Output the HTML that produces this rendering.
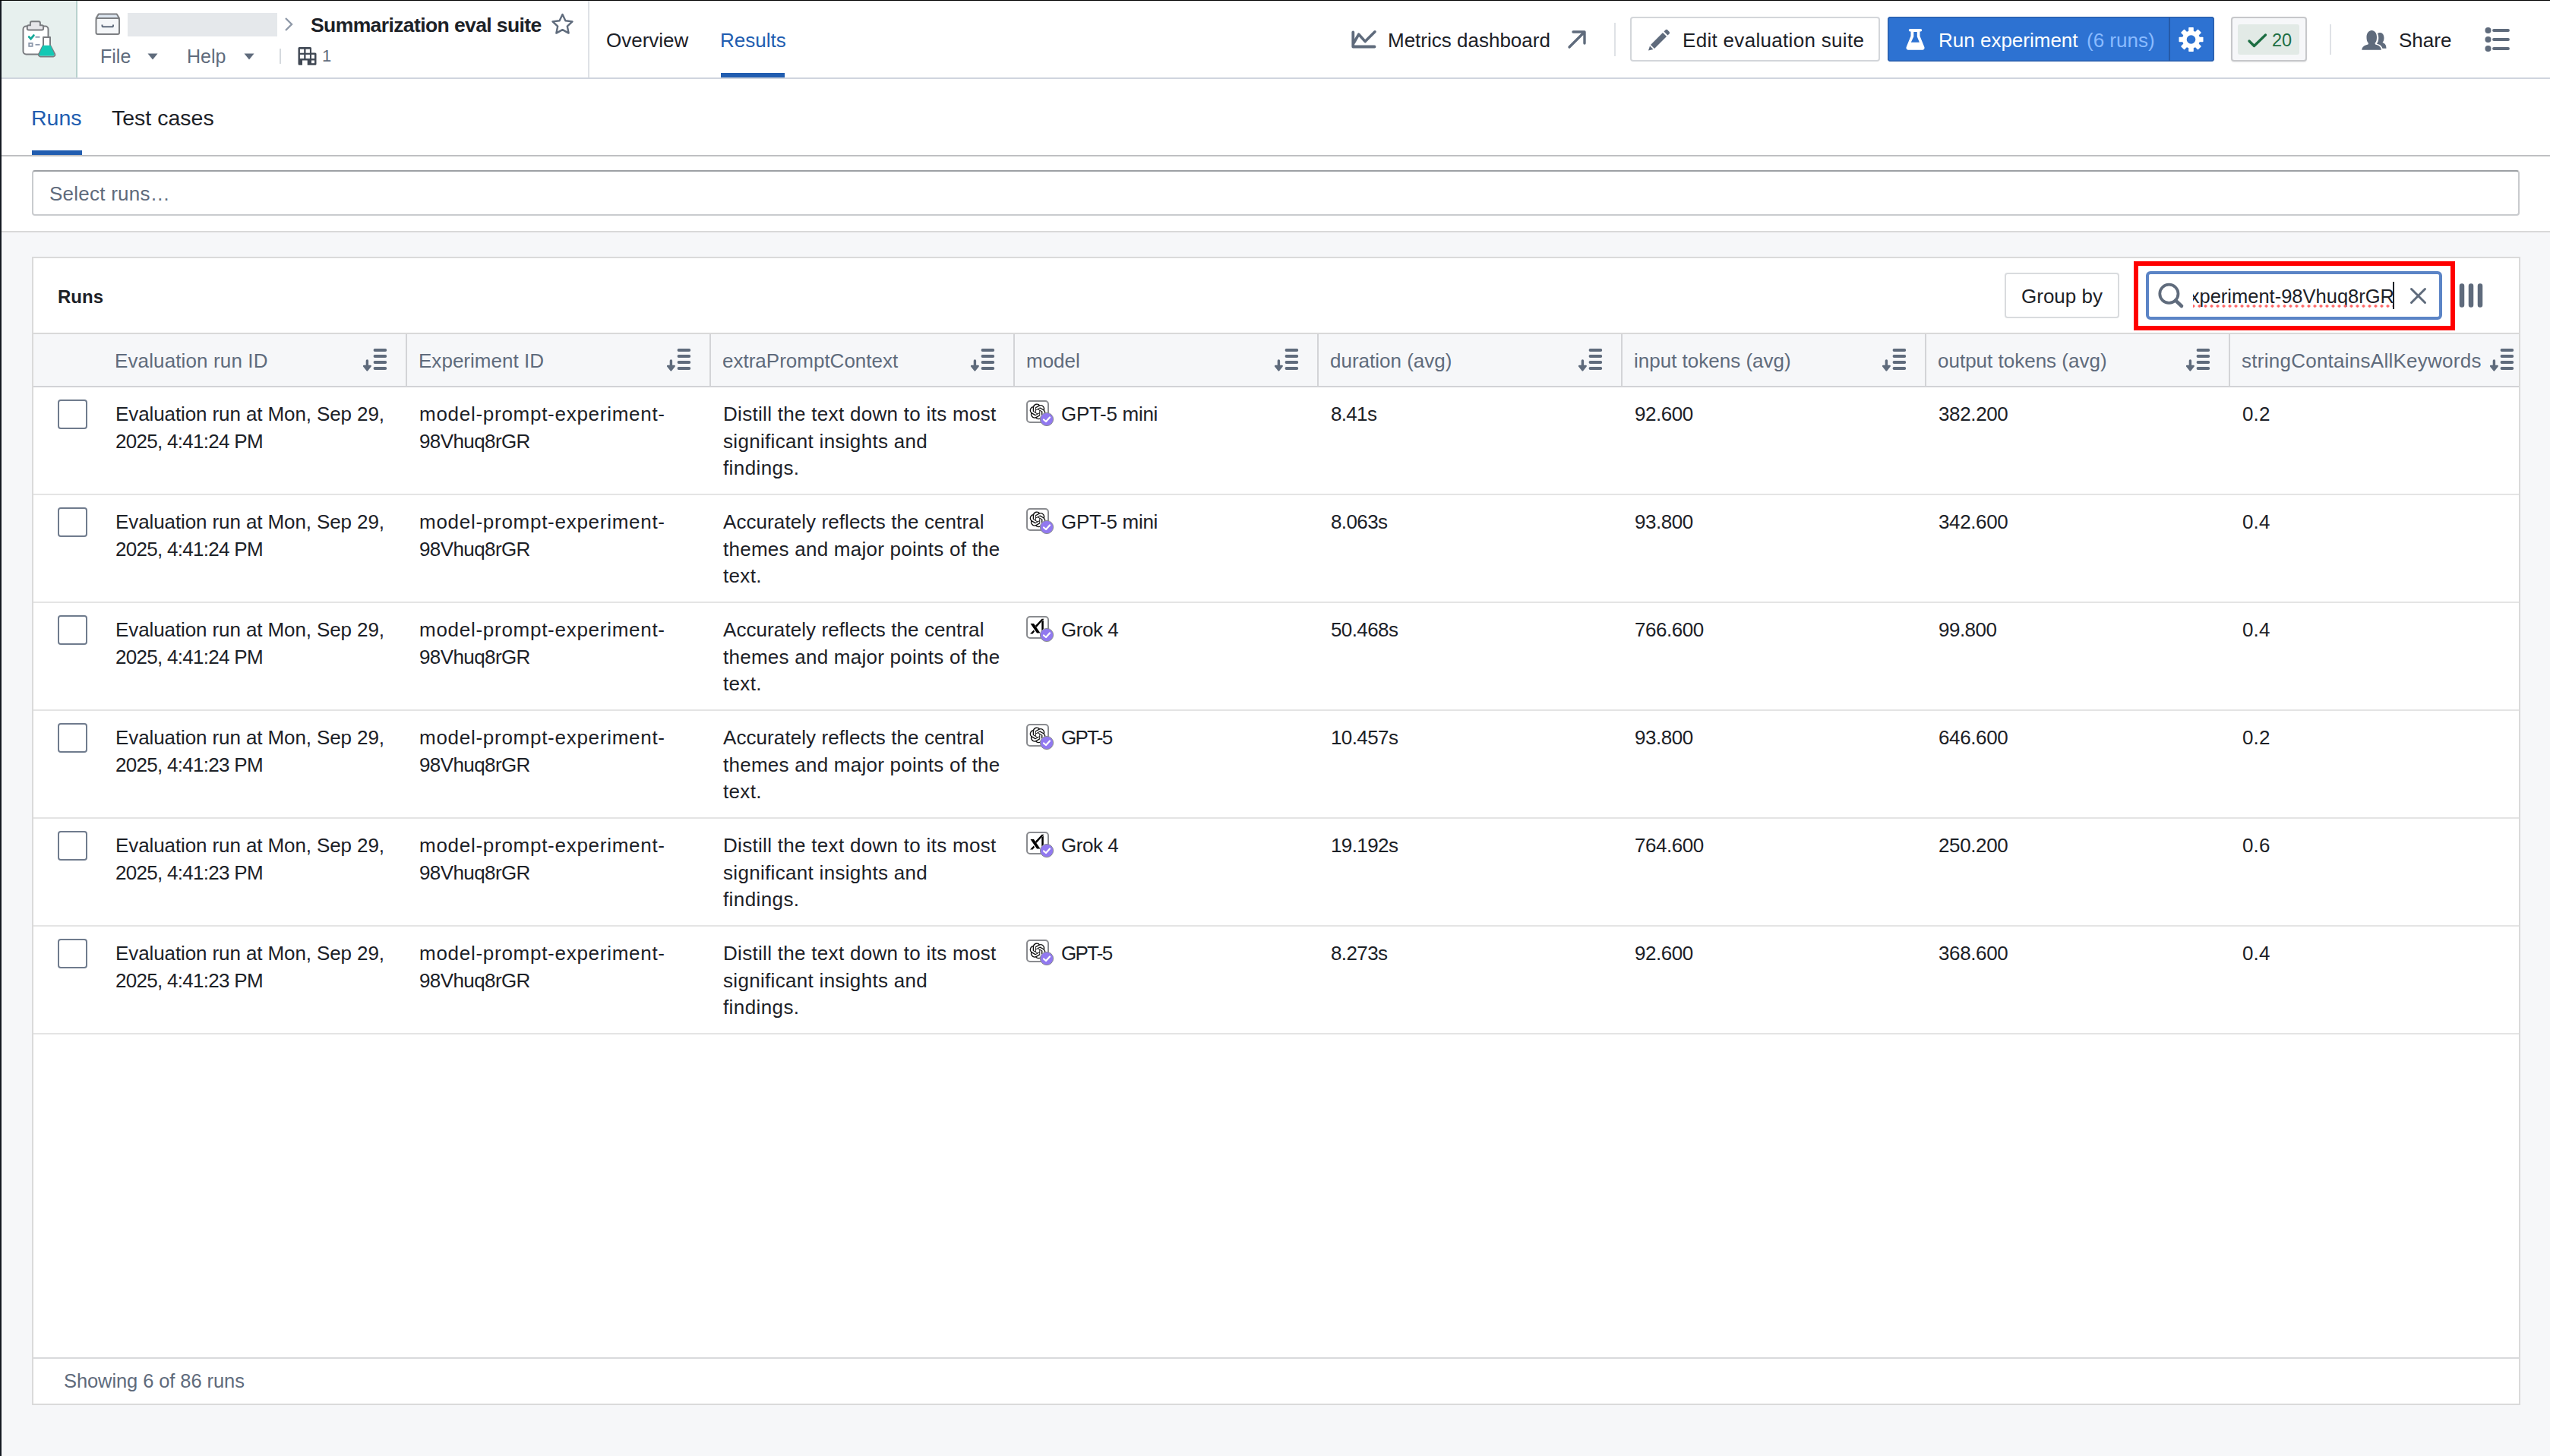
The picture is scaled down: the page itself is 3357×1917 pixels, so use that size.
<!DOCTYPE html>
<html><head><meta charset="utf-8"><title>Summarization eval suite</title>
<style>
html,body{margin:0;padding:0;}
body{width:3357px;height:1917px;position:relative;overflow:hidden;background:#f6f7f9;font-family:"Liberation Sans", sans-serif;}
svg{overflow:visible}
</style></head><body>
<div style="position:absolute;left:0px;top:0px;width:3357px;height:305px;background:#fff"></div>
<div style="position:absolute;left:2px;top:1px;width:98px;height:101px;background:#e7f0ee"></div>
<div style="position:absolute;left:100px;top:1px;width:2px;height:101px;background:#b8d2ce"></div>
<div style="position:absolute;left:0px;top:102px;width:3357px;height:2px;background:#d0d5de"></div>
<svg style="position:absolute;left:26px;top:24px" width="52" height="56" viewBox="0 0 52 56">
<rect x="4.5" y="10.5" width="33" height="37" rx="4" fill="#fff" stroke="#7a7c80" stroke-width="2"/>
<path d="M9.8 13.5 V11.2 a2 2 0 0 1 2 -2 H13.9 V6.2 a2 2 0 0 1 2 -2 H24.9 a2 2 0 0 1 2 2 V9.2 H29.1 a2 2 0 0 1 2 2 V13.5 a2 2 0 0 1 -2 2 H11.8 a2 2 0 0 1 -2 -2 Z" fill="#e6e6ea" stroke="#7a7c80" stroke-width="2"/>
<path d="M12.2 24.6 l2.4 2.6 l3.8 -4.6" fill="none" stroke="#16a99a" stroke-width="2.8" stroke-linecap="round"/>
<rect x="12.2" y="32.9" width="4.4" height="4.0" fill="none" stroke="#8d99ac" stroke-width="1.8"/>
<line x1="20.5" y1="24.8" x2="26.5" y2="24.8" stroke="#8d99ac" stroke-width="1.8"/>
<line x1="20.5" y1="34.8" x2="26.5" y2="34.8" stroke="#8d99ac" stroke-width="1.8"/>
<path d="M31 25.1 H40 V35.5 L46.2 47.3 a2.2 2.2 0 0 1 -1.9 3.1 H27 a2.2 2.2 0 0 1 -1.9 -3.1 L31 35.5 Z" fill="#fff" stroke="#7a7c80" stroke-width="2" stroke-linejoin="round"/>
<path d="M30.4 35.8 H40.6 L45.4 47.2 a1.6 1.6 0 0 1 -1.5 2.2 H27.1 a1.6 1.6 0 0 1 -1.5 -2.2 Z" fill="#14c8b4"/>
</svg>
<svg style="position:absolute;left:124px;top:16px" width="36" height="32" viewBox="0 0 36 32">
<path d="M2.5 8 L5.8 2.5 H29.7 L33 8 z" fill="#dde6f0" stroke="#7d7f82" stroke-width="2" stroke-linejoin="round"/>
<rect x="2.5" y="8" width="30.5" height="21" rx="2" fill="#f5f7f9" stroke="#7d7f82" stroke-width="2"/>
<path d="M10.5 16.5 v1.2 a1.6 1.6 0 0 0 1.6 1.6 h11.3 a1.6 1.6 0 0 0 1.6 -1.6 v-1.2" fill="none" stroke="#5f6b7c" stroke-width="2"/>
</svg>
<div style="position:absolute;left:168px;top:17px;width:197px;height:31px;background:#e5e8eb"></div>
<svg style="position:absolute;left:372px;top:22px" width="16" height="20" viewBox="0 0 16 20"><path d="M4 2 L12 10 L4 18" fill="none" stroke="#8f99a8" stroke-width="2.4"/></svg>
<div style="position:absolute;left:409px;top:19.95px;font-size:26.5px;line-height:26.5px;color:#1c2127;font-weight:700;white-space:nowrap;letter-spacing:-0.6px;">Summarization eval suite</div>
<svg style="position:absolute;left:725px;top:16px" width="32" height="30" viewBox="0 0 32 30"><path d="M15.5 3 L19.4 11.3 L28.5 12.4 L21.8 18.6 L23.6 27.6 L15.5 23.1 L7.4 27.6 L9.2 18.6 L2.5 12.4 L11.6 11.3 Z" fill="none" stroke="#5f6b7c" stroke-width="2.4" stroke-linejoin="round"/></svg>
<div style="position:absolute;left:132px;top:62.10px;font-size:25px;line-height:25px;color:#5f6b7c;font-weight:400;white-space:nowrap;">File</div>
<svg style="position:absolute;left:194px;top:70px" width="14" height="9" viewBox="0 0 14 9"><path d="M0.5 0.5 h13 L7 8.5 z" fill="#5f6b7c"/></svg>
<div style="position:absolute;left:246px;top:62.10px;font-size:25px;line-height:25px;color:#5f6b7c;font-weight:400;white-space:nowrap;">Help</div>
<svg style="position:absolute;left:321px;top:70px" width="14" height="9" viewBox="0 0 14 9"><path d="M0.5 0.5 h13 L7 8.5 z" fill="#5f6b7c"/></svg>
<div style="position:absolute;left:368px;top:64px;width:2px;height:20px;background:#d5d9de"></div>
<svg style="position:absolute;left:392px;top:61px" width="26" height="26" viewBox="0 0 26 26"><path d="M0.5 2.6 a1.5 1.5 0 0 1 1.5 -1.5 H16.5 a1.5 1.5 0 0 1 1.5 1.5 V8.5 H23 a1.5 1.5 0 0 1 1.5 1.5 V23.2 a1.5 1.5 0 0 1 -1.5 1.5 H12.7 V18.5 H6 V24.7 H2 a1.5 1.5 0 0 1 -1.5 -1.5 Z" fill="#404854"/><g fill="#fff"><rect x="2.9" y="3.7" width="5.3" height="5"/><rect x="10.5" y="3.7" width="5.4" height="5"/><rect x="2.9" y="10.9" width="5.3" height="5.2"/><rect x="10.5" y="10.9" width="5.4" height="5.2"/><rect x="18" y="10.9" width="4" height="5.2"/><rect x="18" y="18.5" width="4" height="3.7"/></g></svg>
<div style="position:absolute;left:424px;top:63.20px;font-size:22px;line-height:22px;color:#5f6b7c;font-weight:400;white-space:nowrap;">1</div>
<div style="position:absolute;left:774px;top:1px;width:2px;height:101px;background:#dfe2e6"></div>
<div style="position:absolute;left:798px;top:39.70px;font-size:26px;line-height:26px;color:#1c2127;font-weight:400;white-space:nowrap;">Overview</div>
<div style="position:absolute;left:948px;top:39.70px;font-size:26px;line-height:26px;color:#215db0;font-weight:400;white-space:nowrap;">Results</div>
<div style="position:absolute;left:949px;top:96px;width:84px;height:6px;background:#215db0"></div>
<svg style="position:absolute;left:1777px;top:38px" width="38" height="28" viewBox="0 0 38 28"><path d="M4.3 4.5 V23.5 H32.5" fill="none" stroke="#5f6b7c" stroke-width="3.8" stroke-linejoin="round" stroke-linecap="round"/><path d="M5.5 18 L11.8 7.2 L20.2 16.6 L33 3.8" fill="none" stroke="#5f6b7c" stroke-width="3.6" stroke-linejoin="round" stroke-linecap="round"/></svg>
<div style="position:absolute;left:1827px;top:39.80px;font-size:26px;line-height:26px;color:#1c2127;font-weight:400;white-space:nowrap;">Metrics dashboard</div>
<svg style="position:absolute;left:2062px;top:38px" width="28" height="28" viewBox="0 0 28 28"><path d="M4 24 L23 5 M9 4 H24 V19" fill="none" stroke="#5f6b7c" stroke-width="3.4" stroke-linecap="round" stroke-linejoin="round"/></svg>
<div style="position:absolute;left:2125px;top:30px;width:2px;height:44px;background:#dfe2e6"></div>
<div style="position:absolute;left:2146px;top:22px;width:329px;height:59px;box-sizing:border-box;border:2px solid #d3d6da;border-radius:4px;background:#fff"></div>
<svg style="position:absolute;left:2168px;top:36px" width="32" height="32" viewBox="0 0 32 32"><path d="M5 23 L21 7 L26 12 L10 28 z" fill="#5f6b7c"/><path d="M22.5 5.5 L24.5 3.5 a2 2 0 0 1 2.8 0 l2.2 2.2 a2 2 0 0 1 0 2.8 L27.5 10.5 z" fill="#5f6b7c"/><path d="M4 24.5 L8.5 29 L2 30.5 z" fill="#5f6b7c"/></svg>
<div style="position:absolute;left:2215px;top:39.80px;font-size:26px;line-height:26px;color:#1c2127;font-weight:400;white-space:nowrap;letter-spacing:0.31px;">Edit evaluation suite</div>
<div style="position:absolute;left:2485px;top:22px;width:430px;height:59px;background:#2d72d2;border-radius:4px;box-shadow:inset 0 0 0 1.5px #2a5eab"></div>
<div style="position:absolute;left:2855px;top:23px;width:2px;height:57px;background:#255aa8"></div>
<svg style="position:absolute;left:2506px;top:36px" width="30" height="32" viewBox="0 0 30 32"><path fill-rule="evenodd" d="M8.5 2 H22.5 a1.7 1.7 0 0 1 0 3.4 H21.5 V11.6 L27.4 26 a2.8 2.8 0 0 1 -2.6 3.8 H6.2 a2.8 2.8 0 0 1 -2.6 -3.8 L9.5 11.6 V5.4 H8.5 a1.7 1.7 0 0 1 0 -3.4 Z M13.3 5.9 V12.2 L9.8 19.8 H20.9 L17.8 12.2 V5.9 Z" fill="#fff"/></svg>
<div style="position:absolute;left:2552px;top:39.80px;font-size:26px;line-height:26px;color:#fff;font-weight:400;white-space:nowrap;">Run experiment</div>
<div style="position:absolute;left:2747px;top:39.80px;font-size:26px;line-height:26px;color:#8abbff;font-weight:400;white-space:nowrap;">(6 runs)</div>
<svg style="position:absolute;left:2866px;top:34px" width="36" height="36" viewBox="0 0 36 36"><g transform="translate(18.5,18)"><rect x="-3.3" y="-16" width="6.6" height="8" rx="0.8" transform="rotate(0)" fill="#fff"/><rect x="-3.3" y="-16" width="6.6" height="8" rx="0.8" transform="rotate(45)" fill="#fff"/><rect x="-3.3" y="-16" width="6.6" height="8" rx="0.8" transform="rotate(90)" fill="#fff"/><rect x="-3.3" y="-16" width="6.6" height="8" rx="0.8" transform="rotate(135)" fill="#fff"/><rect x="-3.3" y="-16" width="6.6" height="8" rx="0.8" transform="rotate(180)" fill="#fff"/><rect x="-3.3" y="-16" width="6.6" height="8" rx="0.8" transform="rotate(225)" fill="#fff"/><rect x="-3.3" y="-16" width="6.6" height="8" rx="0.8" transform="rotate(270)" fill="#fff"/><rect x="-3.3" y="-16" width="6.6" height="8" rx="0.8" transform="rotate(315)" fill="#fff"/><circle r="11.6" fill="#fff"/><circle r="5.8" fill="#2d72d2"/></g></svg>
<div style="position:absolute;left:2937px;top:22px;width:100px;height:59px;box-sizing:border-box;border:2px solid #c6c7ca;border-radius:4px;background:#f6f7f9;box-shadow:0 1px 2px rgba(0,0,0,0.08)"></div>
<div style="position:absolute;left:2946px;top:32px;width:81px;height:40px;background:#e2eae6;border-radius:3px"></div>
<svg style="position:absolute;left:2958px;top:43px" width="28" height="22" viewBox="0 0 28 22"><path d="M3 11 L9.5 17.5 L24.5 3" fill="none" stroke="#1c6e42" stroke-width="3.3" stroke-linecap="round" stroke-linejoin="round"/></svg>
<div style="position:absolute;left:2991px;top:42.05px;font-size:23.5px;line-height:23.5px;color:#1c6e42;font-weight:400;white-space:nowrap;">20</div>
<div style="position:absolute;left:3067px;top:32px;width:2px;height:40px;background:#dfe2e6"></div>
<svg style="position:absolute;left:3107px;top:38px" width="38" height="30" viewBox="0 0 38 30"><path d="M23 6 C24 5.3 25.5 5 26.5 5 C29.5 5 31.5 8 31.5 12 C31.5 14.5 30.8 16.5 29.5 18 C32.5 19 34.5 21 34.5 25.8 H29.5 C28.5 22.5 26.5 21 23 20 L22 19.5 C23.5 17.5 24.3 15 24.3 12 C24.3 9.8 23.8 7.8 23 6 Z" fill="#5f6b7c"/><path d="M2.3 27.8 C2.5 23.5 6 21.5 10.5 20.5 L11 19 C9 17 8.5 14 8.5 11 C8.5 5.5 11.5 2 15.3 2 C19.1 2 22 5.5 22 11 C22 14 21.5 17 19.5 19 L20 20.5 C24.5 21.5 27.7 23.5 27.9 27.8 Z" fill="#5f6b7c" stroke="#fff" stroke-width="2.2" paint-order="stroke"/></svg>
<div style="position:absolute;left:3158px;top:39.80px;font-size:26px;line-height:26px;color:#1c2127;font-weight:400;white-space:nowrap;">Share</div>
<svg style="position:absolute;left:3268px;top:33px" width="38" height="38" viewBox="0 0 38 38"><circle cx="7.5" cy="7" r="4" fill="#5f6b7c"/><circle cx="7.5" cy="19" r="4" fill="#5f6b7c"/><circle cx="7.5" cy="31" r="4" fill="#5f6b7c"/>
<path d="M15 7 H34 M15 19 H34 M15 31 H34" stroke="#5f6b7c" stroke-width="3.8" stroke-linecap="round"/></svg>
<div style="position:absolute;left:41px;top:140.75px;font-size:28.5px;line-height:28.5px;color:#215db0;font-weight:400;white-space:nowrap;">Runs</div>
<div style="position:absolute;left:147px;top:140.75px;font-size:28.5px;line-height:28.5px;color:#1c2127;font-weight:400;white-space:nowrap;">Test cases</div>
<div style="position:absolute;left:42px;top:198px;width:65.5px;height:6px;background:#215db0"></div>
<div style="position:absolute;left:2px;top:204px;width:3355px;height:2px;background:#bfc0c2"></div>
<div style="position:absolute;left:42px;top:224px;width:3275px;height:59.5px;box-sizing:border-box;border:2px solid #c9cbce;border-top-color:#9da0a4;border-radius:4px;background:#fff"></div>
<div style="position:absolute;left:65px;top:242.00px;font-size:26px;line-height:26px;color:#5f6b7c;font-weight:400;white-space:nowrap;letter-spacing:0.236px;">Select runs…</div>
<div style="position:absolute;left:2px;top:304px;width:3355px;height:2px;background:#d9d9d9"></div>
<div style="position:absolute;left:2px;top:306px;width:3355px;height:1611px;background:#f6f7f9"></div>
<div style="position:absolute;left:42px;top:338px;width:3276px;height:1512px;box-sizing:border-box;border:2px solid #dadada;background:#fff"></div>
<div style="position:absolute;left:76px;top:379.00px;font-size:24px;line-height:24px;color:#1c2127;font-weight:700;white-space:nowrap;">Runs</div>
<div style="position:absolute;left:2639px;top:359px;width:151px;height:60px;box-sizing:border-box;border:2px solid #d9dbde;border-radius:4px;background:#fff"></div>
<div style="position:absolute;left:2661px;top:377.00px;font-size:26px;line-height:26px;color:#1c2127;font-weight:400;white-space:nowrap;">Group by</div>
<div style="position:absolute;left:2825px;top:357px;width:390px;height:64px;box-sizing:border-box;border:4px solid #5b84c6;border-radius:6px;background:#fff"></div>
<svg style="position:absolute;left:2840px;top:371px" width="36" height="36" viewBox="0 0 36 36"><circle cx="15.4" cy="15.8" r="12.1" fill="none" stroke="#5f6b7c" stroke-width="3.8"/><path d="M24 24.5 L32 32" stroke="#5f6b7c" stroke-width="4.6" stroke-linecap="round"/></svg>
<div style="position:absolute;left:2887px;top:370px;width:265px;height:36px;overflow:hidden">
<div style="position:absolute;right:0;top:7px;font-size:25.5px;line-height:26px;color:#1c2127;white-space:nowrap">experiment-98Vhuq8rGR</div>
</div>
<div style="position:absolute;left:2887px;top:401px;width:264px;height:4px;background:radial-gradient(circle,#ff6363 1.5px,transparent 2.1px) -3.5px 0/8px 4px repeat-x"></div>
<div style="position:absolute;left:3150px;top:371px;width:2px;height:36px;background:#1c2127"></div>
<svg style="position:absolute;left:3172px;top:378px" width="23" height="23" viewBox="0 0 23 23"><path d="M2.5 2.5 L20.5 20.5 M20.5 2.5 L2.5 20.5" stroke="#5f6b7c" stroke-width="3" stroke-linecap="round"/></svg>
<div style="position:absolute;left:2809px;top:344px;width:423px;height:91px;box-sizing:border-box;border:6px solid #ff0000"></div>
<svg style="position:absolute;left:3236px;top:372px" width="36" height="34" viewBox="0 0 36 34"><path d="M5 4.5 V29.5 M17 4.5 V29.5 M29 4.5 V29.5" stroke="#5f6b7c" stroke-width="6.5" stroke-linecap="round"/></svg>
<div style="position:absolute;left:44px;top:438px;width:3272px;height:71px;background:#f6f7f9"></div>
<div style="position:absolute;left:44px;top:438px;width:3272px;height:2px;background:#d9d9d9"></div>
<div style="position:absolute;left:44px;top:508px;width:3272px;height:2px;background:#d2d3d6"></div>
<div style="position:absolute;left:534px;top:440px;width:2px;height:68px;background:#d3d4d7"></div>
<div style="position:absolute;left:934px;top:440px;width:2px;height:68px;background:#d3d4d7"></div>
<div style="position:absolute;left:1334px;top:440px;width:2px;height:68px;background:#d3d4d7"></div>
<div style="position:absolute;left:1734px;top:440px;width:2px;height:68px;background:#d3d4d7"></div>
<div style="position:absolute;left:2134px;top:440px;width:2px;height:68px;background:#d3d4d7"></div>
<div style="position:absolute;left:2534px;top:440px;width:2px;height:68px;background:#d3d4d7"></div>
<div style="position:absolute;left:2934px;top:440px;width:2px;height:68px;background:#d3d4d7"></div>
<div style="position:absolute;left:151px;top:462.20px;font-size:26px;line-height:26px;color:#5f6b7c;font-weight:400;white-space:nowrap;letter-spacing:0.125px;">Evaluation run ID</div>
<svg style="position:absolute;left:477px;top:457px" width="34" height="34" viewBox="0 0 34 34"><path d="M16.5 4 H30.3 M16.5 12 H30.3 M16.5 20 H30.3 M16.5 28 H30.3" stroke="#5f6b7c" stroke-width="3.8" stroke-linecap="round"/><path d="M6.4 18 V26" stroke="#5f6b7c" stroke-width="3.4" stroke-linecap="round"/><path d="M2.2 25 L6.4 30.3 L10.6 25 Z" fill="#5f6b7c" stroke="#5f6b7c" stroke-width="2.6" stroke-linejoin="round"/></svg>
<div style="position:absolute;left:551px;top:462.20px;font-size:26px;line-height:26px;color:#5f6b7c;font-weight:400;white-space:nowrap;letter-spacing:0.025px;">Experiment ID</div>
<svg style="position:absolute;left:877px;top:457px" width="34" height="34" viewBox="0 0 34 34"><path d="M16.5 4 H30.3 M16.5 12 H30.3 M16.5 20 H30.3 M16.5 28 H30.3" stroke="#5f6b7c" stroke-width="3.8" stroke-linecap="round"/><path d="M6.4 18 V26" stroke="#5f6b7c" stroke-width="3.4" stroke-linecap="round"/><path d="M2.2 25 L6.4 30.3 L10.6 25 Z" fill="#5f6b7c" stroke="#5f6b7c" stroke-width="2.6" stroke-linejoin="round"/></svg>
<div style="position:absolute;left:951px;top:462.20px;font-size:26px;line-height:26px;color:#5f6b7c;font-weight:400;white-space:nowrap;">extraPromptContext</div>
<svg style="position:absolute;left:1277px;top:457px" width="34" height="34" viewBox="0 0 34 34"><path d="M16.5 4 H30.3 M16.5 12 H30.3 M16.5 20 H30.3 M16.5 28 H30.3" stroke="#5f6b7c" stroke-width="3.8" stroke-linecap="round"/><path d="M6.4 18 V26" stroke="#5f6b7c" stroke-width="3.4" stroke-linecap="round"/><path d="M2.2 25 L6.4 30.3 L10.6 25 Z" fill="#5f6b7c" stroke="#5f6b7c" stroke-width="2.6" stroke-linejoin="round"/></svg>
<div style="position:absolute;left:1351px;top:462.20px;font-size:26px;line-height:26px;color:#5f6b7c;font-weight:400;white-space:nowrap;">model</div>
<svg style="position:absolute;left:1677px;top:457px" width="34" height="34" viewBox="0 0 34 34"><path d="M16.5 4 H30.3 M16.5 12 H30.3 M16.5 20 H30.3 M16.5 28 H30.3" stroke="#5f6b7c" stroke-width="3.8" stroke-linecap="round"/><path d="M6.4 18 V26" stroke="#5f6b7c" stroke-width="3.4" stroke-linecap="round"/><path d="M2.2 25 L6.4 30.3 L10.6 25 Z" fill="#5f6b7c" stroke="#5f6b7c" stroke-width="2.6" stroke-linejoin="round"/></svg>
<div style="position:absolute;left:1751px;top:462.20px;font-size:26px;line-height:26px;color:#5f6b7c;font-weight:400;white-space:nowrap;">duration (avg)</div>
<svg style="position:absolute;left:2077px;top:457px" width="34" height="34" viewBox="0 0 34 34"><path d="M16.5 4 H30.3 M16.5 12 H30.3 M16.5 20 H30.3 M16.5 28 H30.3" stroke="#5f6b7c" stroke-width="3.8" stroke-linecap="round"/><path d="M6.4 18 V26" stroke="#5f6b7c" stroke-width="3.4" stroke-linecap="round"/><path d="M2.2 25 L6.4 30.3 L10.6 25 Z" fill="#5f6b7c" stroke="#5f6b7c" stroke-width="2.6" stroke-linejoin="round"/></svg>
<div style="position:absolute;left:2151px;top:462.20px;font-size:26px;line-height:26px;color:#5f6b7c;font-weight:400;white-space:nowrap;">input tokens (avg)</div>
<svg style="position:absolute;left:2477px;top:457px" width="34" height="34" viewBox="0 0 34 34"><path d="M16.5 4 H30.3 M16.5 12 H30.3 M16.5 20 H30.3 M16.5 28 H30.3" stroke="#5f6b7c" stroke-width="3.8" stroke-linecap="round"/><path d="M6.4 18 V26" stroke="#5f6b7c" stroke-width="3.4" stroke-linecap="round"/><path d="M2.2 25 L6.4 30.3 L10.6 25 Z" fill="#5f6b7c" stroke="#5f6b7c" stroke-width="2.6" stroke-linejoin="round"/></svg>
<div style="position:absolute;left:2551px;top:462.20px;font-size:26px;line-height:26px;color:#5f6b7c;font-weight:400;white-space:nowrap;">output tokens (avg)</div>
<svg style="position:absolute;left:2877px;top:457px" width="34" height="34" viewBox="0 0 34 34"><path d="M16.5 4 H30.3 M16.5 12 H30.3 M16.5 20 H30.3 M16.5 28 H30.3" stroke="#5f6b7c" stroke-width="3.8" stroke-linecap="round"/><path d="M6.4 18 V26" stroke="#5f6b7c" stroke-width="3.4" stroke-linecap="round"/><path d="M2.2 25 L6.4 30.3 L10.6 25 Z" fill="#5f6b7c" stroke="#5f6b7c" stroke-width="2.6" stroke-linejoin="round"/></svg>
<div style="position:absolute;left:2951px;top:462.20px;font-size:26px;line-height:26px;color:#5f6b7c;font-weight:400;white-space:nowrap;letter-spacing:0.258px;">stringContainsAllKeywords</div>
<svg style="position:absolute;left:3277px;top:457px" width="34" height="34" viewBox="0 0 34 34"><path d="M16.5 4 H30.3 M16.5 12 H30.3 M16.5 20 H30.3 M16.5 28 H30.3" stroke="#5f6b7c" stroke-width="3.8" stroke-linecap="round"/><path d="M6.4 18 V26" stroke="#5f6b7c" stroke-width="3.4" stroke-linecap="round"/><path d="M2.2 25 L6.4 30.3 L10.6 25 Z" fill="#5f6b7c" stroke="#5f6b7c" stroke-width="2.6" stroke-linejoin="round"/></svg>
<div style="position:absolute;left:44px;top:650px;width:3272px;height:2px;background:#e4e4e4"></div>
<div style="position:absolute;left:76px;top:526px;width:39px;height:39px;box-sizing:border-box;border:2px solid #6f7b8d;border-radius:4px;background:#fff"></div>
<div style="position:absolute;left:152px;top:532.00px;font-size:26px;line-height:26px;color:#1c2127;font-weight:400;white-space:nowrap;letter-spacing:-0.103px;">Evaluation run at Mon, Sep 29,</div>
<div style="position:absolute;left:152px;top:567.60px;font-size:26px;line-height:26px;color:#1c2127;font-weight:400;white-space:nowrap;letter-spacing:-0.713px;">2025, 4:41:24 PM</div>
<div style="position:absolute;left:552px;top:532.00px;font-size:26px;line-height:26px;color:#1c2127;font-weight:400;white-space:nowrap;letter-spacing:0.726px;">model-prompt-experiment-</div>
<div style="position:absolute;left:552px;top:567.60px;font-size:26px;line-height:26px;color:#1c2127;font-weight:400;white-space:nowrap;letter-spacing:-0.6px;">98Vhuq8rGR</div>
<div style="position:absolute;left:952px;top:532.00px;font-size:26px;line-height:26px;color:#1c2127;font-weight:400;white-space:nowrap;letter-spacing:0.3px;">Distill the text down to its most</div>
<div style="position:absolute;left:952px;top:567.60px;font-size:26px;line-height:26px;color:#1c2127;font-weight:400;white-space:nowrap;letter-spacing:0.313px;">significant insights and</div>
<div style="position:absolute;left:952px;top:603.20px;font-size:26px;line-height:26px;color:#1c2127;font-weight:400;white-space:nowrap;letter-spacing:0.4px;">findings.</div>
<svg style="position:absolute;left:1351px;top:527px" width="40" height="40" viewBox="0 0 40 40"><rect x="1" y="1" width="28" height="28" rx="4" fill="#fff" stroke="#8a8c90" stroke-width="2"/><g transform="translate(4.6,4.4) scale(0.87)"><path d="M22.2819 9.8211a5.9847 5.9847 0 0 0-.5157-4.9108 6.0462 6.0462 0 0 0-6.5098-2.9A6.0651 6.0651 0 0 0 4.9807 4.1818a5.9847 5.9847 0 0 0-3.9977 2.9 6.0462 6.0462 0 0 0 .7427 7.0966 5.98 5.98 0 0 0 .511 4.9107 6.051 6.051 0 0 0 6.5146 2.9001A5.9847 5.9847 0 0 0 13.2599 24a6.0557 6.0557 0 0 0 5.7718-4.2058 5.9894 5.9894 0 0 0 3.9977-2.9001 6.0557 6.0557 0 0 0-.7475-7.0729zm-9.022 12.6081a4.4755 4.4755 0 0 1-2.8764-1.0408l.1419-.0804 4.7783-2.7582a.7948.7948 0 0 0 .3927-.6813v-6.7369l2.02 1.1686a.071.071 0 0 1 .038.052v5.5826a4.504 4.504 0 0 1-4.4945 4.4944zm-9.6607-4.1254a4.4708 4.4708 0 0 1-.5346-3.0137l.142.0852 4.783 2.7582a.7712.7712 0 0 0 .7806 0l5.8428-3.3685v2.3324a.0804.0804 0 0 1-.0332.0615L9.74 19.9502a4.4992 4.4992 0 0 1-6.1408-1.6464zM2.3408 7.8956a4.485 4.485 0 0 1 2.3655-1.9728V11.6a.7664.7664 0 0 0 .3879.6765l5.8144 3.3543-2.0201 1.1685a.0757.0757 0 0 1-.071 0l-4.8303-2.7865A4.504 4.504 0 0 1 2.3408 7.872zm16.5963 3.8558L13.1038 8.364 15.1192 7.2a.0757.0757 0 0 1 .071 0l4.8303 2.7913a4.4944 4.4944 0 0 1-.6765 8.1042v-5.6772a.79.79 0 0 0-.407-.667zm2.0107-3.0231l-.142-.0852-4.7735-2.7818a.7759.7759 0 0 0-.7854 0L9.409 9.2297V6.8974a.0662.0662 0 0 1 .0284-.0615l4.8303-2.7866a4.4992 4.4992 0 0 1 6.6802 4.66zM8.3065 12.863l-2.02-1.1638a.0804.0804 0 0 1-.038-.0567V6.0742a4.4992 4.4992 0 0 1 7.3757-3.4537l-.142.0805L8.704 5.459a.7948.7948 0 0 0-.3927.6813zm1.0976-2.3654l2.602-1.4998 2.6069 1.4998v2.9994l-2.5974 1.4997-2.6067-1.4997Z" fill="#111"/></g><circle cx="27" cy="25" r="8.6" fill="#9179f0" stroke="#8a8c90" stroke-width="1"/><path d="M23 25.5 L26 28 L31 22.5" fill="none" stroke="#fff" stroke-width="2.2" stroke-linecap="round" stroke-linejoin="round"/></svg>
<div style="position:absolute;left:1397px;top:532.00px;font-size:26px;line-height:26px;color:#1c2127;font-weight:400;white-space:nowrap;letter-spacing:-0.3px;">GPT-5 mini</div>
<div style="position:absolute;left:1752px;top:532.00px;font-size:26px;line-height:26px;color:#1c2127;font-weight:400;white-space:nowrap;letter-spacing:-0.675px;">8.41s</div>
<div style="position:absolute;left:2152px;top:532.00px;font-size:26px;line-height:26px;color:#1c2127;font-weight:400;white-space:nowrap;letter-spacing:-0.45px;">92.600</div>
<div style="position:absolute;left:2552px;top:532.00px;font-size:26px;line-height:26px;color:#1c2127;font-weight:400;white-space:nowrap;letter-spacing:-0.367px;">382.200</div>
<div style="position:absolute;left:2952px;top:532.00px;font-size:26px;line-height:26px;color:#1c2127;font-weight:400;white-space:nowrap;letter-spacing:0.1px;">0.2</div>
<div style="position:absolute;left:44px;top:792px;width:3272px;height:2px;background:#e4e4e4"></div>
<div style="position:absolute;left:76px;top:668px;width:39px;height:39px;box-sizing:border-box;border:2px solid #6f7b8d;border-radius:4px;background:#fff"></div>
<div style="position:absolute;left:152px;top:674.00px;font-size:26px;line-height:26px;color:#1c2127;font-weight:400;white-space:nowrap;letter-spacing:-0.103px;">Evaluation run at Mon, Sep 29,</div>
<div style="position:absolute;left:152px;top:709.60px;font-size:26px;line-height:26px;color:#1c2127;font-weight:400;white-space:nowrap;letter-spacing:-0.713px;">2025, 4:41:24 PM</div>
<div style="position:absolute;left:552px;top:674.00px;font-size:26px;line-height:26px;color:#1c2127;font-weight:400;white-space:nowrap;letter-spacing:0.726px;">model-prompt-experiment-</div>
<div style="position:absolute;left:552px;top:709.60px;font-size:26px;line-height:26px;color:#1c2127;font-weight:400;white-space:nowrap;letter-spacing:-0.6px;">98Vhuq8rGR</div>
<div style="position:absolute;left:952px;top:674.00px;font-size:26px;line-height:26px;color:#1c2127;font-weight:400;white-space:nowrap;letter-spacing:0.08px;">Accurately reflects the central</div>
<div style="position:absolute;left:952px;top:709.60px;font-size:26px;line-height:26px;color:#1c2127;font-weight:400;white-space:nowrap;letter-spacing:0.252px;">themes and major points of the</div>
<div style="position:absolute;left:952px;top:745.20px;font-size:26px;line-height:26px;color:#1c2127;font-weight:400;white-space:nowrap;letter-spacing:0.325px;">text.</div>
<svg style="position:absolute;left:1351px;top:669px" width="40" height="40" viewBox="0 0 40 40"><rect x="1" y="1" width="28" height="28" rx="4" fill="#fff" stroke="#8a8c90" stroke-width="2"/><g transform="translate(4.6,4.4) scale(0.87)"><path d="M22.2819 9.8211a5.9847 5.9847 0 0 0-.5157-4.9108 6.0462 6.0462 0 0 0-6.5098-2.9A6.0651 6.0651 0 0 0 4.9807 4.1818a5.9847 5.9847 0 0 0-3.9977 2.9 6.0462 6.0462 0 0 0 .7427 7.0966 5.98 5.98 0 0 0 .511 4.9107 6.051 6.051 0 0 0 6.5146 2.9001A5.9847 5.9847 0 0 0 13.2599 24a6.0557 6.0557 0 0 0 5.7718-4.2058 5.9894 5.9894 0 0 0 3.9977-2.9001 6.0557 6.0557 0 0 0-.7475-7.0729zm-9.022 12.6081a4.4755 4.4755 0 0 1-2.8764-1.0408l.1419-.0804 4.7783-2.7582a.7948.7948 0 0 0 .3927-.6813v-6.7369l2.02 1.1686a.071.071 0 0 1 .038.052v5.5826a4.504 4.504 0 0 1-4.4945 4.4944zm-9.6607-4.1254a4.4708 4.4708 0 0 1-.5346-3.0137l.142.0852 4.783 2.7582a.7712.7712 0 0 0 .7806 0l5.8428-3.3685v2.3324a.0804.0804 0 0 1-.0332.0615L9.74 19.9502a4.4992 4.4992 0 0 1-6.1408-1.6464zM2.3408 7.8956a4.485 4.485 0 0 1 2.3655-1.9728V11.6a.7664.7664 0 0 0 .3879.6765l5.8144 3.3543-2.0201 1.1685a.0757.0757 0 0 1-.071 0l-4.8303-2.7865A4.504 4.504 0 0 1 2.3408 7.872zm16.5963 3.8558L13.1038 8.364 15.1192 7.2a.0757.0757 0 0 1 .071 0l4.8303 2.7913a4.4944 4.4944 0 0 1-.6765 8.1042v-5.6772a.79.79 0 0 0-.407-.667zm2.0107-3.0231l-.142-.0852-4.7735-2.7818a.7759.7759 0 0 0-.7854 0L9.409 9.2297V6.8974a.0662.0662 0 0 1 .0284-.0615l4.8303-2.7866a4.4992 4.4992 0 0 1 6.6802 4.66zM8.3065 12.863l-2.02-1.1638a.0804.0804 0 0 1-.038-.0567V6.0742a4.4992 4.4992 0 0 1 7.3757-3.4537l-.142.0805L8.704 5.459a.7948.7948 0 0 0-.3927.6813zm1.0976-2.3654l2.602-1.4998 2.6069 1.4998v2.9994l-2.5974 1.4997-2.6067-1.4997Z" fill="#111"/></g><circle cx="27" cy="25" r="8.6" fill="#9179f0" stroke="#8a8c90" stroke-width="1"/><path d="M23 25.5 L26 28 L31 22.5" fill="none" stroke="#fff" stroke-width="2.2" stroke-linecap="round" stroke-linejoin="round"/></svg>
<div style="position:absolute;left:1397px;top:674.00px;font-size:26px;line-height:26px;color:#1c2127;font-weight:400;white-space:nowrap;letter-spacing:-0.3px;">GPT-5 mini</div>
<div style="position:absolute;left:1752px;top:674.00px;font-size:26px;line-height:26px;color:#1c2127;font-weight:400;white-space:nowrap;letter-spacing:-0.6px;">8.063s</div>
<div style="position:absolute;left:2152px;top:674.00px;font-size:26px;line-height:26px;color:#1c2127;font-weight:400;white-space:nowrap;letter-spacing:-0.45px;">93.800</div>
<div style="position:absolute;left:2552px;top:674.00px;font-size:26px;line-height:26px;color:#1c2127;font-weight:400;white-space:nowrap;letter-spacing:-0.37px;">342.600</div>
<div style="position:absolute;left:2952px;top:674.00px;font-size:26px;line-height:26px;color:#1c2127;font-weight:400;white-space:nowrap;letter-spacing:0.1px;">0.4</div>
<div style="position:absolute;left:44px;top:934px;width:3272px;height:2px;background:#e4e4e4"></div>
<div style="position:absolute;left:76px;top:810px;width:39px;height:39px;box-sizing:border-box;border:2px solid #6f7b8d;border-radius:4px;background:#fff"></div>
<div style="position:absolute;left:152px;top:816.00px;font-size:26px;line-height:26px;color:#1c2127;font-weight:400;white-space:nowrap;letter-spacing:-0.103px;">Evaluation run at Mon, Sep 29,</div>
<div style="position:absolute;left:152px;top:851.60px;font-size:26px;line-height:26px;color:#1c2127;font-weight:400;white-space:nowrap;letter-spacing:-0.713px;">2025, 4:41:24 PM</div>
<div style="position:absolute;left:552px;top:816.00px;font-size:26px;line-height:26px;color:#1c2127;font-weight:400;white-space:nowrap;letter-spacing:0.726px;">model-prompt-experiment-</div>
<div style="position:absolute;left:552px;top:851.60px;font-size:26px;line-height:26px;color:#1c2127;font-weight:400;white-space:nowrap;letter-spacing:-0.6px;">98Vhuq8rGR</div>
<div style="position:absolute;left:952px;top:816.00px;font-size:26px;line-height:26px;color:#1c2127;font-weight:400;white-space:nowrap;letter-spacing:0.08px;">Accurately reflects the central</div>
<div style="position:absolute;left:952px;top:851.60px;font-size:26px;line-height:26px;color:#1c2127;font-weight:400;white-space:nowrap;letter-spacing:0.252px;">themes and major points of the</div>
<div style="position:absolute;left:952px;top:887.20px;font-size:26px;line-height:26px;color:#1c2127;font-weight:400;white-space:nowrap;letter-spacing:0.325px;">text.</div>
<svg style="position:absolute;left:1351px;top:811px" width="40" height="40" viewBox="0 0 40 40"><rect x="1" y="1" width="28" height="28" rx="4" fill="#fff" stroke="#8a8c90" stroke-width="2"/><path d="M5.5 10 L10 10 L18.5 22.5 L14 22.5 Z" fill="#000"/><path d="M23.5 3.8 L13.5 15 L12 12.8 L20.5 3.8 Z" fill="#000"/><path d="M5 23.5 L9.8 18.5 L11 20.5 L8.5 23.5 Z" fill="#000"/><path d="M20.3 7.5 L22.8 5.5 V17 L20.3 19.5 Z" fill="#000"/><circle cx="27" cy="25" r="8.6" fill="#9179f0" stroke="#8a8c90" stroke-width="1"/><path d="M23 25.5 L26 28 L31 22.5" fill="none" stroke="#fff" stroke-width="2.2" stroke-linecap="round" stroke-linejoin="round"/></svg>
<div style="position:absolute;left:1397px;top:816.00px;font-size:26px;line-height:26px;color:#1c2127;font-weight:400;white-space:nowrap;letter-spacing:-0.46px;">Grok 4</div>
<div style="position:absolute;left:1752px;top:816.00px;font-size:26px;line-height:26px;color:#1c2127;font-weight:400;white-space:nowrap;letter-spacing:-0.6px;">50.468s</div>
<div style="position:absolute;left:2152px;top:816.00px;font-size:26px;line-height:26px;color:#1c2127;font-weight:400;white-space:nowrap;letter-spacing:-0.45px;">766.600</div>
<div style="position:absolute;left:2552px;top:816.00px;font-size:26px;line-height:26px;color:#1c2127;font-weight:400;white-space:nowrap;letter-spacing:-0.52px;">99.800</div>
<div style="position:absolute;left:2952px;top:816.00px;font-size:26px;line-height:26px;color:#1c2127;font-weight:400;white-space:nowrap;letter-spacing:0.1px;">0.4</div>
<div style="position:absolute;left:44px;top:1076px;width:3272px;height:2px;background:#e4e4e4"></div>
<div style="position:absolute;left:76px;top:952px;width:39px;height:39px;box-sizing:border-box;border:2px solid #6f7b8d;border-radius:4px;background:#fff"></div>
<div style="position:absolute;left:152px;top:958.00px;font-size:26px;line-height:26px;color:#1c2127;font-weight:400;white-space:nowrap;letter-spacing:-0.103px;">Evaluation run at Mon, Sep 29,</div>
<div style="position:absolute;left:152px;top:993.60px;font-size:26px;line-height:26px;color:#1c2127;font-weight:400;white-space:nowrap;letter-spacing:-0.713px;">2025, 4:41:23 PM</div>
<div style="position:absolute;left:552px;top:958.00px;font-size:26px;line-height:26px;color:#1c2127;font-weight:400;white-space:nowrap;letter-spacing:0.726px;">model-prompt-experiment-</div>
<div style="position:absolute;left:552px;top:993.60px;font-size:26px;line-height:26px;color:#1c2127;font-weight:400;white-space:nowrap;letter-spacing:-0.6px;">98Vhuq8rGR</div>
<div style="position:absolute;left:952px;top:958.00px;font-size:26px;line-height:26px;color:#1c2127;font-weight:400;white-space:nowrap;letter-spacing:0.08px;">Accurately reflects the central</div>
<div style="position:absolute;left:952px;top:993.60px;font-size:26px;line-height:26px;color:#1c2127;font-weight:400;white-space:nowrap;letter-spacing:0.252px;">themes and major points of the</div>
<div style="position:absolute;left:952px;top:1029.20px;font-size:26px;line-height:26px;color:#1c2127;font-weight:400;white-space:nowrap;letter-spacing:0.325px;">text.</div>
<svg style="position:absolute;left:1351px;top:953px" width="40" height="40" viewBox="0 0 40 40"><rect x="1" y="1" width="28" height="28" rx="4" fill="#fff" stroke="#8a8c90" stroke-width="2"/><g transform="translate(4.6,4.4) scale(0.87)"><path d="M22.2819 9.8211a5.9847 5.9847 0 0 0-.5157-4.9108 6.0462 6.0462 0 0 0-6.5098-2.9A6.0651 6.0651 0 0 0 4.9807 4.1818a5.9847 5.9847 0 0 0-3.9977 2.9 6.0462 6.0462 0 0 0 .7427 7.0966 5.98 5.98 0 0 0 .511 4.9107 6.051 6.051 0 0 0 6.5146 2.9001A5.9847 5.9847 0 0 0 13.2599 24a6.0557 6.0557 0 0 0 5.7718-4.2058 5.9894 5.9894 0 0 0 3.9977-2.9001 6.0557 6.0557 0 0 0-.7475-7.0729zm-9.022 12.6081a4.4755 4.4755 0 0 1-2.8764-1.0408l.1419-.0804 4.7783-2.7582a.7948.7948 0 0 0 .3927-.6813v-6.7369l2.02 1.1686a.071.071 0 0 1 .038.052v5.5826a4.504 4.504 0 0 1-4.4945 4.4944zm-9.6607-4.1254a4.4708 4.4708 0 0 1-.5346-3.0137l.142.0852 4.783 2.7582a.7712.7712 0 0 0 .7806 0l5.8428-3.3685v2.3324a.0804.0804 0 0 1-.0332.0615L9.74 19.9502a4.4992 4.4992 0 0 1-6.1408-1.6464zM2.3408 7.8956a4.485 4.485 0 0 1 2.3655-1.9728V11.6a.7664.7664 0 0 0 .3879.6765l5.8144 3.3543-2.0201 1.1685a.0757.0757 0 0 1-.071 0l-4.8303-2.7865A4.504 4.504 0 0 1 2.3408 7.872zm16.5963 3.8558L13.1038 8.364 15.1192 7.2a.0757.0757 0 0 1 .071 0l4.8303 2.7913a4.4944 4.4944 0 0 1-.6765 8.1042v-5.6772a.79.79 0 0 0-.407-.667zm2.0107-3.0231l-.142-.0852-4.7735-2.7818a.7759.7759 0 0 0-.7854 0L9.409 9.2297V6.8974a.0662.0662 0 0 1 .0284-.0615l4.8303-2.7866a4.4992 4.4992 0 0 1 6.6802 4.66zM8.3065 12.863l-2.02-1.1638a.0804.0804 0 0 1-.038-.0567V6.0742a4.4992 4.4992 0 0 1 7.3757-3.4537l-.142.0805L8.704 5.459a.7948.7948 0 0 0-.3927.6813zm1.0976-2.3654l2.602-1.4998 2.6069 1.4998v2.9994l-2.5974 1.4997-2.6067-1.4997Z" fill="#111"/></g><circle cx="27" cy="25" r="8.6" fill="#9179f0" stroke="#8a8c90" stroke-width="1"/><path d="M23 25.5 L26 28 L31 22.5" fill="none" stroke="#fff" stroke-width="2.2" stroke-linecap="round" stroke-linejoin="round"/></svg>
<div style="position:absolute;left:1397px;top:958.00px;font-size:26px;line-height:26px;color:#1c2127;font-weight:400;white-space:nowrap;letter-spacing:-1.75px;">GPT-5</div>
<div style="position:absolute;left:1752px;top:958.00px;font-size:26px;line-height:26px;color:#1c2127;font-weight:400;white-space:nowrap;letter-spacing:-0.6px;">10.457s</div>
<div style="position:absolute;left:2152px;top:958.00px;font-size:26px;line-height:26px;color:#1c2127;font-weight:400;white-space:nowrap;letter-spacing:-0.45px;">93.800</div>
<div style="position:absolute;left:2552px;top:958.00px;font-size:26px;line-height:26px;color:#1c2127;font-weight:400;white-space:nowrap;letter-spacing:-0.37px;">646.600</div>
<div style="position:absolute;left:2952px;top:958.00px;font-size:26px;line-height:26px;color:#1c2127;font-weight:400;white-space:nowrap;letter-spacing:0.1px;">0.2</div>
<div style="position:absolute;left:44px;top:1218px;width:3272px;height:2px;background:#e4e4e4"></div>
<div style="position:absolute;left:76px;top:1094px;width:39px;height:39px;box-sizing:border-box;border:2px solid #6f7b8d;border-radius:4px;background:#fff"></div>
<div style="position:absolute;left:152px;top:1100.00px;font-size:26px;line-height:26px;color:#1c2127;font-weight:400;white-space:nowrap;letter-spacing:-0.103px;">Evaluation run at Mon, Sep 29,</div>
<div style="position:absolute;left:152px;top:1135.60px;font-size:26px;line-height:26px;color:#1c2127;font-weight:400;white-space:nowrap;letter-spacing:-0.713px;">2025, 4:41:23 PM</div>
<div style="position:absolute;left:552px;top:1100.00px;font-size:26px;line-height:26px;color:#1c2127;font-weight:400;white-space:nowrap;letter-spacing:0.726px;">model-prompt-experiment-</div>
<div style="position:absolute;left:552px;top:1135.60px;font-size:26px;line-height:26px;color:#1c2127;font-weight:400;white-space:nowrap;letter-spacing:-0.6px;">98Vhuq8rGR</div>
<div style="position:absolute;left:952px;top:1100.00px;font-size:26px;line-height:26px;color:#1c2127;font-weight:400;white-space:nowrap;letter-spacing:0.3px;">Distill the text down to its most</div>
<div style="position:absolute;left:952px;top:1135.60px;font-size:26px;line-height:26px;color:#1c2127;font-weight:400;white-space:nowrap;letter-spacing:0.313px;">significant insights and</div>
<div style="position:absolute;left:952px;top:1171.20px;font-size:26px;line-height:26px;color:#1c2127;font-weight:400;white-space:nowrap;letter-spacing:0.4px;">findings.</div>
<svg style="position:absolute;left:1351px;top:1095px" width="40" height="40" viewBox="0 0 40 40"><rect x="1" y="1" width="28" height="28" rx="4" fill="#fff" stroke="#8a8c90" stroke-width="2"/><path d="M5.5 10 L10 10 L18.5 22.5 L14 22.5 Z" fill="#000"/><path d="M23.5 3.8 L13.5 15 L12 12.8 L20.5 3.8 Z" fill="#000"/><path d="M5 23.5 L9.8 18.5 L11 20.5 L8.5 23.5 Z" fill="#000"/><path d="M20.3 7.5 L22.8 5.5 V17 L20.3 19.5 Z" fill="#000"/><circle cx="27" cy="25" r="8.6" fill="#9179f0" stroke="#8a8c90" stroke-width="1"/><path d="M23 25.5 L26 28 L31 22.5" fill="none" stroke="#fff" stroke-width="2.2" stroke-linecap="round" stroke-linejoin="round"/></svg>
<div style="position:absolute;left:1397px;top:1100.00px;font-size:26px;line-height:26px;color:#1c2127;font-weight:400;white-space:nowrap;letter-spacing:-0.46px;">Grok 4</div>
<div style="position:absolute;left:1752px;top:1100.00px;font-size:26px;line-height:26px;color:#1c2127;font-weight:400;white-space:nowrap;letter-spacing:-0.6px;">19.192s</div>
<div style="position:absolute;left:2152px;top:1100.00px;font-size:26px;line-height:26px;color:#1c2127;font-weight:400;white-space:nowrap;letter-spacing:-0.45px;">764.600</div>
<div style="position:absolute;left:2552px;top:1100.00px;font-size:26px;line-height:26px;color:#1c2127;font-weight:400;white-space:nowrap;letter-spacing:-0.37px;">250.200</div>
<div style="position:absolute;left:2952px;top:1100.00px;font-size:26px;line-height:26px;color:#1c2127;font-weight:400;white-space:nowrap;letter-spacing:0.1px;">0.6</div>
<div style="position:absolute;left:44px;top:1360px;width:3272px;height:2px;background:#e4e4e4"></div>
<div style="position:absolute;left:76px;top:1236px;width:39px;height:39px;box-sizing:border-box;border:2px solid #6f7b8d;border-radius:4px;background:#fff"></div>
<div style="position:absolute;left:152px;top:1242.00px;font-size:26px;line-height:26px;color:#1c2127;font-weight:400;white-space:nowrap;letter-spacing:-0.103px;">Evaluation run at Mon, Sep 29,</div>
<div style="position:absolute;left:152px;top:1277.60px;font-size:26px;line-height:26px;color:#1c2127;font-weight:400;white-space:nowrap;letter-spacing:-0.713px;">2025, 4:41:23 PM</div>
<div style="position:absolute;left:552px;top:1242.00px;font-size:26px;line-height:26px;color:#1c2127;font-weight:400;white-space:nowrap;letter-spacing:0.726px;">model-prompt-experiment-</div>
<div style="position:absolute;left:552px;top:1277.60px;font-size:26px;line-height:26px;color:#1c2127;font-weight:400;white-space:nowrap;letter-spacing:-0.6px;">98Vhuq8rGR</div>
<div style="position:absolute;left:952px;top:1242.00px;font-size:26px;line-height:26px;color:#1c2127;font-weight:400;white-space:nowrap;letter-spacing:0.3px;">Distill the text down to its most</div>
<div style="position:absolute;left:952px;top:1277.60px;font-size:26px;line-height:26px;color:#1c2127;font-weight:400;white-space:nowrap;letter-spacing:0.313px;">significant insights and</div>
<div style="position:absolute;left:952px;top:1313.20px;font-size:26px;line-height:26px;color:#1c2127;font-weight:400;white-space:nowrap;letter-spacing:0.4px;">findings.</div>
<svg style="position:absolute;left:1351px;top:1237px" width="40" height="40" viewBox="0 0 40 40"><rect x="1" y="1" width="28" height="28" rx="4" fill="#fff" stroke="#8a8c90" stroke-width="2"/><g transform="translate(4.6,4.4) scale(0.87)"><path d="M22.2819 9.8211a5.9847 5.9847 0 0 0-.5157-4.9108 6.0462 6.0462 0 0 0-6.5098-2.9A6.0651 6.0651 0 0 0 4.9807 4.1818a5.9847 5.9847 0 0 0-3.9977 2.9 6.0462 6.0462 0 0 0 .7427 7.0966 5.98 5.98 0 0 0 .511 4.9107 6.051 6.051 0 0 0 6.5146 2.9001A5.9847 5.9847 0 0 0 13.2599 24a6.0557 6.0557 0 0 0 5.7718-4.2058 5.9894 5.9894 0 0 0 3.9977-2.9001 6.0557 6.0557 0 0 0-.7475-7.0729zm-9.022 12.6081a4.4755 4.4755 0 0 1-2.8764-1.0408l.1419-.0804 4.7783-2.7582a.7948.7948 0 0 0 .3927-.6813v-6.7369l2.02 1.1686a.071.071 0 0 1 .038.052v5.5826a4.504 4.504 0 0 1-4.4945 4.4944zm-9.6607-4.1254a4.4708 4.4708 0 0 1-.5346-3.0137l.142.0852 4.783 2.7582a.7712.7712 0 0 0 .7806 0l5.8428-3.3685v2.3324a.0804.0804 0 0 1-.0332.0615L9.74 19.9502a4.4992 4.4992 0 0 1-6.1408-1.6464zM2.3408 7.8956a4.485 4.485 0 0 1 2.3655-1.9728V11.6a.7664.7664 0 0 0 .3879.6765l5.8144 3.3543-2.0201 1.1685a.0757.0757 0 0 1-.071 0l-4.8303-2.7865A4.504 4.504 0 0 1 2.3408 7.872zm16.5963 3.8558L13.1038 8.364 15.1192 7.2a.0757.0757 0 0 1 .071 0l4.8303 2.7913a4.4944 4.4944 0 0 1-.6765 8.1042v-5.6772a.79.79 0 0 0-.407-.667zm2.0107-3.0231l-.142-.0852-4.7735-2.7818a.7759.7759 0 0 0-.7854 0L9.409 9.2297V6.8974a.0662.0662 0 0 1 .0284-.0615l4.8303-2.7866a4.4992 4.4992 0 0 1 6.6802 4.66zM8.3065 12.863l-2.02-1.1638a.0804.0804 0 0 1-.038-.0567V6.0742a4.4992 4.4992 0 0 1 7.3757-3.4537l-.142.0805L8.704 5.459a.7948.7948 0 0 0-.3927.6813zm1.0976-2.3654l2.602-1.4998 2.6069 1.4998v2.9994l-2.5974 1.4997-2.6067-1.4997Z" fill="#111"/></g><circle cx="27" cy="25" r="8.6" fill="#9179f0" stroke="#8a8c90" stroke-width="1"/><path d="M23 25.5 L26 28 L31 22.5" fill="none" stroke="#fff" stroke-width="2.2" stroke-linecap="round" stroke-linejoin="round"/></svg>
<div style="position:absolute;left:1397px;top:1242.00px;font-size:26px;line-height:26px;color:#1c2127;font-weight:400;white-space:nowrap;letter-spacing:-1.75px;">GPT-5</div>
<div style="position:absolute;left:1752px;top:1242.00px;font-size:26px;line-height:26px;color:#1c2127;font-weight:400;white-space:nowrap;letter-spacing:-0.6px;">8.273s</div>
<div style="position:absolute;left:2152px;top:1242.00px;font-size:26px;line-height:26px;color:#1c2127;font-weight:400;white-space:nowrap;letter-spacing:-0.45px;">92.600</div>
<div style="position:absolute;left:2552px;top:1242.00px;font-size:26px;line-height:26px;color:#1c2127;font-weight:400;white-space:nowrap;letter-spacing:-0.37px;">368.600</div>
<div style="position:absolute;left:2952px;top:1242.00px;font-size:26px;line-height:26px;color:#1c2127;font-weight:400;white-space:nowrap;letter-spacing:0.1px;">0.4</div>
<div style="position:absolute;left:44px;top:1787px;width:3272px;height:2px;background:#d9dadc"></div>
<div style="position:absolute;left:84px;top:1806.45px;font-size:25.5px;line-height:25.5px;color:#5f6b7c;font-weight:400;white-space:nowrap;letter-spacing:-0.089px;">Showing 6 of 86 runs</div>
<div style="position:absolute;left:0px;top:0px;width:2px;height:1917px;background:#151a22"></div>
<div style="position:absolute;left:0px;top:0px;width:3357px;height:1px;background:#000"></div>
</body></html>
